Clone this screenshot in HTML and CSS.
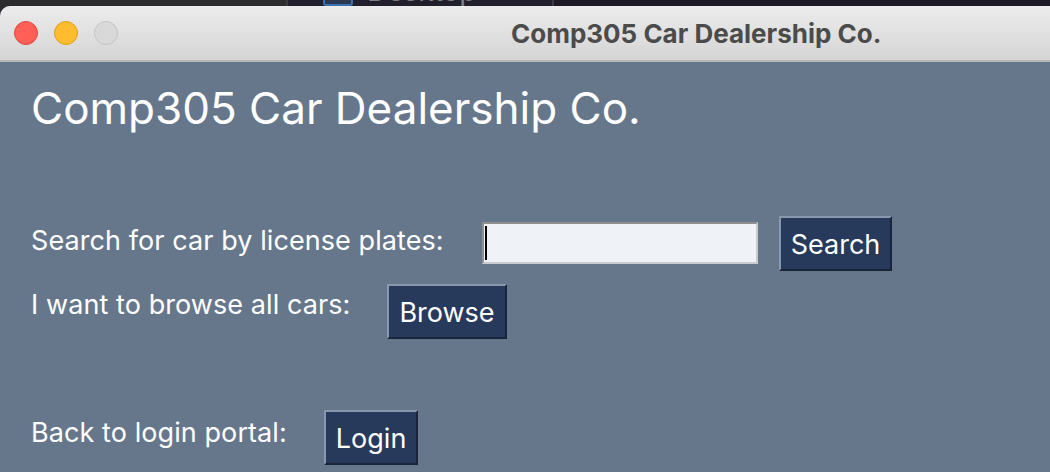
FILE: index.html
```html
<!DOCTYPE html>
<html>
<head>
<meta charset="utf-8">
<link rel="stylesheet" href="styles.css">
</head>
<body>
<div class="strip">
  <div class="seg seg-a"></div>
  <div class="seg seg-b">
    <span class="folder"></span>
    <span class="desk-text">Desktop</span>
  </div>
  <div class="seg seg-c"></div>
</div>
<div class="window">
  <div class="titlebar">
    <div class="lights">
      <span class="light red"></span>
      <span class="light yellow"></span>
      <span class="light gray"></span>
    </div>
    <div class="title">Comp305 Car Dealership Co.</div>
  </div>
  <div class="content">
    <h1 class="heading">Comp305 Car Dealership Co.</h1>
    <div class="row row-search">
      <span class="label">Search for car by license plates:</span>
      <div class="field"><span class="caret"></span></div>
      <button class="btn">Search</button>
    </div>
    <div class="row row-browse">
      <span class="label">I want to browse all cars:</span>
      <button class="btn">Browse</button>
    </div>
    <div class="row row-login">
      <span class="label">Back to login portal:</span>
      <button class="btn">Login</button>
    </div>
  </div>
</div>
</body>
</html>
```

FILE: styles.css
```css
html, body {
  margin: 0;
  padding: 0;
  width: 1050px;
  height: 472px;
  overflow: hidden;
  background: #2b2b2d;
  font-family: Inter, "Noto Sans", sans-serif;
}

.strip {
  display: flex;
  height: 6px;
  overflow: hidden;
}
.seg { height: 100%; }
.seg-a {
  width: 286px;
  background: #2c2c2e;
  border-right: 2px solid #3c3c3e;
}
.seg-b {
  width: 264px;
  background: #221f2c;
  border-right: 2px solid #3a3840;
  position: relative;
  overflow: hidden;
}
.seg-c {
  flex: 1;
  background: #1d1a26;
}
.folder {
  position: absolute;
  left: 35px;
  top: -20px;
  width: 26px;
  height: 22px;
  border: 2px solid #3b6fb3;
  border-radius: 3px;
  background: #2a3850;
}
.desk-text {
  position: absolute;
  left: 79px;
  top: -24px;
  font-size: 28px;
  line-height: 30px;
  color: #7f7f86;
}

.window {
  border-top-left-radius: 10px;
  overflow: hidden;
  height: 466px;
  background: #66778c;
}

.titlebar {
  height: 54px;
  background: linear-gradient(#ececec, #d5d5d5);
  border-bottom: 2px solid #b8b8b8;
  display: flex;
  align-items: center;
}
.lights {
  display: flex;
  gap: 16px;
  padding-left: 14px;
}
.light {
  width: 22px;
  height: 22px;
  border-radius: 50%;
  border: 1px solid rgba(0,0,0,0.12);
}
.red { background: #fe5f57; border-color: #e2463f; }
.yellow { background: #febc2e; border-color: #e1a116; }
.gray { background: #d9d9d9; border-color: #c4c4c4; }
.title {
  margin-left: 393px;
  font-size: 26px;
  font-weight: 700;
  color: #4b4b4b;
}

.content {
  padding-left: 31px;
  color: #ffffff;
}
.heading {
  margin: 0;
  padding-top: 20px;
  font-size: 44px;
  font-weight: 400;
  line-height: 52px;
}

.row {
  display: flex;
  align-items: flex-start;
}
.row-search { margin-top: 82px; }
.row-browse { margin-top: 13px; }
.row-login { margin-top: 71px; }

.label {
  font-size: 27px;
  line-height: 32px;
  letter-spacing: 0.08px;
  margin-right: 37px;
}
.row-search .label { margin-top: 9px; margin-right: 38px; }
.row-browse .label { margin-top: 5px; }
.row-login .label { margin-top: 7px; }

.field {
  margin-top: 6px;
  width: 272px;
  height: 38px;
  background: #eff2f7;
  border-style: solid;
  border-width: 2px;
  border-color: #8f8f8f #c9cbcf #c9cbcf #8f8f8f;
  margin-right: 21px;
  display: flex;
  align-items: center;
}
.caret {
  width: 2px;
  height: 34px;
  margin-left: 1px;
  background: #000;
}

.btn {
  height: 55px;
  padding: 1px 10px 0;
  background: #283a5b;
  color: #ffffff;
  font-family: Inter, "Noto Sans", sans-serif;
  font-size: 27px;
  border-style: solid;
  border-width: 2px;
  border-color: #8a98ad #1a2539 #1a2539 #8a98ad;
  border-radius: 0;
  line-height: 1;
}
```
